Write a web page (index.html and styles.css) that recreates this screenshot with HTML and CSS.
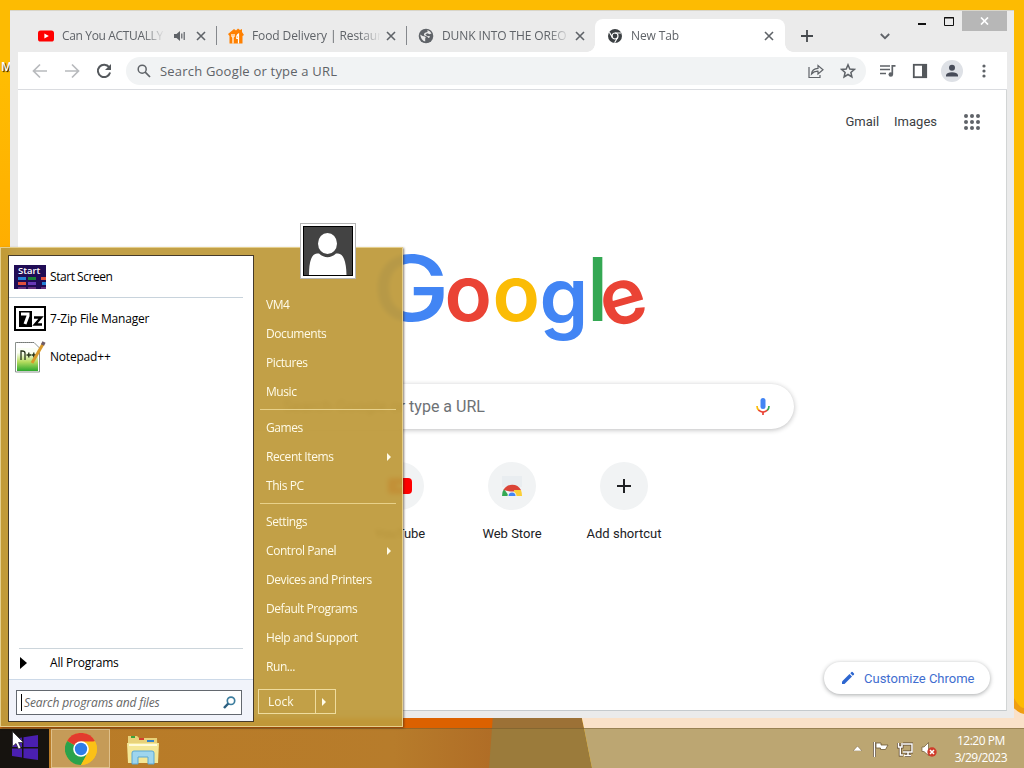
FILE: index.html
```
<!DOCTYPE html>
<html>
<head>
	<title>New Tab</title>
	<meta charset="utf-8"/>
	<link rel="stylesheet" href="styles.css">
</head>
<body>

<div class="desktop">
	<svg class="wallpaper" width="1024" height="768">
		<defs>
			<linearGradient id="wall" x1="0" y1="0" x2="0" y2="1">
				<stop offset="0" stop-color="#ffbd02"/>
				<stop offset=".3" stop-color="#ffa900"/>
				<stop offset="1" stop-color="#ff9800"/>
			</linearGradient>
			<linearGradient id="bar" x1="0" y1="0" x2="1" y2="0">
				<stop offset="0" stop-color="#b97b26"/>
				<stop offset=".8" stop-color="#b77c2b"/>
				<stop offset="1" stop-color="#b06d26"/>
			</linearGradient>
		</defs>
		<rect width="1024" height="768" fill="#fdbb02"/>
		<rect width="12" height="768" y="72" fill="url(#wall)"/>
		<rect x="0" y="700" width="496" height="28" fill="#dc6100"/>
		<path d="M494 700H578L584 728H492Z" fill="#9c7136"/>
		<path d="M578 700H1010Q1018 712 1024 712V728H584Z" fill="#fae1c8"/>
		<path d="M1010 690Q1018 708 1024 708V714Q1016 712 1010 704Z" fill="#ef9e12"/>
		<rect y="728" width="492" height="40" fill="url(#bar)"/>
		<path d="M492 728H584L592 768H489Z" fill="#9b7b3b"/>
		<path d="M584 728H1024V768H592Z" fill="#bca672"/>
	</svg>
	<div class="label">M</div>

	<!-- browser window -->
	<div class="window">
		<div class="tabs">
			<div class="tab">
				<svg width="16" height="16" viewBox="0 0 16 16"><rect y="2.5" width="16" height="11" rx="2.6" fill="#f00"/><path d="M6.4 5.4L10.8 8L6.4 10.6Z" fill="#fff"/></svg>
				<span class="title short">Can You ACTUALLY</span>
				<svg class="sound" width="12" height="12" viewBox="0 0 12 12"><path d="M0 4H2.5L6 1V11L2.5 8H0Z" fill="#5f6368"/><path d="M7.8 3.5V8.5M10.2 2V10" stroke="#5f6368" stroke-width="1.2"/></svg>
				<svg class="x" width="10" height="10" viewBox="0 0 10 10"><path d="M1 1L9 9M9 1L1 9"/></svg>
			</div>
			<div class="tab">
				<svg width="16" height="16" viewBox="0 0 16 16"><path d="M0 6L6 1L8 2.5L10 .5L12 2L14 1V4L16 7L14.500 8V15.500H1.500V8Z" fill="#ff8000"/><path d="M5 15.500V9M4 6V8.500Q5 10 6 8.500V6M10.500 15.500V6Q8.500 7 8.800 10.500H10.500" fill="none" stroke="#fff" stroke-width="1.200"/></svg>
				<span class="title">Food Delivery | Restaur</span>
				<svg class="x" width="10" height="10" viewBox="0 0 10 10"><path d="M1 1L9 9M9 1L1 9"/></svg>
			</div>
			<div class="tab">
				<svg width="16" height="16" viewBox="0 0 16 16"><circle cx="8" cy="8" r="7.300" fill="#5f6368"/><path d="M2.200 6.500Q4.500 8.500 7 8.600Q8.500 9.500 7.200 10.600V13.600Q3 12.500 2.200 6.500M9.500 2Q12.500 3 13.500 5.500L11.500 6.200L9.500 5.200L7.300 6.200L9 8L12 8.300Q12 9.700 10.200 10L9.600 8.800L6 7.300Q5.500 4.500 9.500 4Z" fill="#ebebeb"/></svg>
				<span class="title">DUNK INTO THE OREO</span>
				<svg class="x" width="10" height="10" viewBox="0 0 10 10"><path d="M1 1L9 9M9 1L1 9"/></svg>
			</div>
			<div class="tab active">
				<svg width="14" height="14" viewBox="0 0 14 14"><circle cx="7" cy="7" r="7" fill="#3c4043"/><circle cx="7" cy="7" r="3" fill="none" stroke="#fff" stroke-width="1.200"/><path d="M7 4H13M4.400 8.500L1.400 3.300M9.600 8.500L6.600 13.700" stroke="#fff" stroke-width="1.200"/></svg>
				<span class="title">New Tab</span>
				<svg class="x" width="10" height="10" viewBox="0 0 10 10"><path d="M1 1L9 9M9 1L1 9"/></svg>
			</div>
			<svg class="plus" width="12" height="12" viewBox="0 0 12 12"><path d="M6 0V12M0 6H12" stroke="#45494d" stroke-width="1.800"/></svg>
			<svg class="chevron" width="10" height="7" viewBox="0 0 10 7"><path d="M.8 1L5 5.200L9.200 1" fill="none" stroke="#5f6368" stroke-width="1.800"/></svg>
			<div class="controls">
				<svg width="44" height="20" viewBox="0 0 44 20"><path d="M0 13H8" stroke="#111" stroke-width="2"/><path d="M26.500 6.500H35.500V14.500H26.500ZM26 7H36" fill="none" stroke="#111" stroke-width="1"/></svg>
				<div class="close"><svg width="9" height="8" viewBox="0 0 9 8"><path d="M1 .5L8 7.500M8 .5L1 7.500" stroke="#fff" stroke-width="1.700"/></svg></div>
			</div>
		</div>
		<div class="toolbar">
			<svg width="16" height="16" viewBox="0 0 16 16"><path d="M15 8H2M8 1.500L1.500 8L8 14.500" fill="none" stroke="#b8babd" stroke-width="1.700"/></svg>
			<svg width="16" height="16" viewBox="0 0 16 16"><path d="M1 8H14M8 1.500L14.500 8L8 14.500" fill="none" stroke="#b8babd" stroke-width="1.700"/></svg>
			<svg width="16" height="16" viewBox="0 0 16 16"><path d="M13.200 4.300A6.200 6.200 0 1 0 14.100 9.500" fill="none" stroke="#54585c" stroke-width="2"/><path d="M15 1V7H9Z" fill="#54585c"/></svg>
			<div class="omnibox">
				<svg width="14" height="14" viewBox="0 0 14 14"><circle cx="5.200" cy="5.200" r="4" fill="none" stroke="#5f6368" stroke-width="1.500"/><path d="M8.200 8.200L13 13" stroke="#5f6368" stroke-width="1.700"/></svg>
				<span>Search Google or type a URL</span>
				<svg width="16" height="16" viewBox="0 0 16 16"><path d="M1 4V14.500H12V12" fill="none" stroke="#5f6368" stroke-width="1.200"/><path d="M3.500 11Q4 5.500 10 5.300V2.500L15 6.800L10 11V8.200Q6 8 3.500 11Z" fill="none" stroke="#5f6368" stroke-width="1.200"/></svg>
				<svg width="16" height="16" viewBox="0 0 16 16"><path d="M8 1.800L9.800 6L14.300 6.400L10.900 9.400L11.900 13.900L8 11.500L4.100 13.900L5.100 9.400L1.700 6.400L6.200 6Z" fill="none" stroke="#5f6368" stroke-width="1.500"/></svg>
			</div>
			<svg width="16" height="14" viewBox="0 0 16 14"><path d="M0 2H10M0 5.500H10M0 9.500H6" stroke="#5f6368" stroke-width="1.700"/><path d="M15.500 1.800H12.300V10" fill="none" stroke="#5f6368" stroke-width="1.700"/><circle cx="10.800" cy="10.500" r="2.300" fill="#5f6368"/></svg>
			<svg width="16" height="16" viewBox="0 0 16 16"><rect x="1.800" y="1.800" width="12.400" height="12.400" fill="none" stroke="#54585c" stroke-width="1.800"/><path d="M10 1H15V15H10Z" fill="#54585c"/></svg>
			<svg width="22" height="22" viewBox="0 0 22 22"><circle cx="11" cy="11" r="11" fill="#dee1e6"/><circle cx="11" cy="7.800" r="3" fill="#474c59"/><path d="M5 16.500V15Q6 12.200 11 12.200Q16 12.200 17 15V16.500Z" fill="#474c59"/></svg>
			<svg width="16" height="16" viewBox="0 0 16 16" fill="#5f6368"><circle cx="8" cy="3" r="1.600"/><circle cx="8" cy="8" r="1.600"/><circle cx="8" cy="13" r="1.600"/></svg>
		</div>
		<div class="page">
			<div class="links">
				<span>Gmail</span><span>Images</span>
				<svg width="16" height="16" viewBox="0 0 16 16" fill="#5f6368"><circle cx="2" cy="2" r="2"/><circle cx="8" cy="2" r="2"/><circle cx="14" cy="2" r="2"/><circle cx="2" cy="8" r="2"/><circle cx="8" cy="8" r="2"/><circle cx="14" cy="8" r="2"/><circle cx="2" cy="14" r="2"/><circle cx="8" cy="14" r="2"/><circle cx="14" cy="14" r="2"/></svg>
			</div>
			<svg class="logo" width="272" height="100" viewBox="0 0 272 100">
				<text class="g1" transform="translate(-4 73) scale(1.14 1)">G</text>
				<text y="73"><tspan class="red" x="68.500">o</tspan><tspan class="yellow" x="116.500">o</tspan><tspan class="blue" x="163.500" y="76">g</tspan><tspan class="green" x="210.500" y="73">l</tspan><tspan class="red" x="231" y="81" rotate="-16">e</tspan></text>
			</svg>
			<div class="search">
				<span>Search Google or type a URL</span>
				<svg width="14" height="20" viewBox="0 0 14 20"><rect x="4.500" y="1" width="5" height="11" rx="2.500" fill="#4285f4"/><path d="M1 9Q1 12 3 13.700" fill="none" stroke="#fbbc05" stroke-width="1.700"/><path d="M2.500 13.200Q7 17 11.500 13.200M7 15V18" fill="none" stroke="#ea4335" stroke-width="1.700"/><path d="M11.300 13.400Q13 12 13 9" fill="none" stroke="#34a853" stroke-width="1.700"/></svg>
			</div>
			<div class="shortcuts">
				<div class="item">
					<div class="circle"><svg width="24" height="16"><rect width="24" height="16" rx="4" fill="#f00"/><path d="M10 5L15 8L10 11Z" fill="#fff"/></svg></div>
					<span>YouTube</span>
				</div>
				<div class="item">
					<div class="circle"><svg width="24" height="24" viewBox="0 0 24 24"><rect x="2" y="2" width="20" height="11" fill="#e9edf0"/><path d="M2 22A10 10 0 0 1 4 15L9 22Z" fill="#34a853"/><path d="M3.500 16A10 10 0 0 1 21 16L12 18Z" fill="#db4437"/><path d="M14 16H21Q22 19 22 22H14Z" fill="#fbce36"/><path d="M7.500 22A4.500 4.500 0 0 1 16.500 22Z" fill="#f1f3f4"/><path d="M8.500 22A3.500 3.500 0 0 1 15.500 22Z" fill="#4285f4"/></svg></div>
					<span>Web Store</span>
				</div>
				<div class="item">
					<div class="circle"><svg width="14" height="14"><path d="M7 0V14M0 7H14" stroke="#202124" stroke-width="2"/></svg></div>
					<span>Add shortcut</span>
				</div>
			</div>
			<div class="customize">
				<svg width="14" height="14" viewBox="0 0 14 14" fill="#2d66d0"><path d="M1 10.500L8.500 3L11 5.500L3.500 13H1Z"/><path d="M9.300 2.200L10.500 1Q11 .6 11.600 1L13 2.500Q13.400 3 13 3.500L11.800 4.700Z"/></svg>
				<span>Customize Chrome</span>
			</div>
		</div>
	</div>

	<!-- taskbar -->
	<div class="taskbar">
		<div class="start"><svg width="26" height="25" viewBox="0 0 26 25" fill="#4a1fb0"><path d="M0 4L10 2.500V12H0ZM11.500 2.200L26 0V12H11.500ZM0 13.500H10V22.500L0 21ZM11.500 13.500H26V25L11.500 23Z"/></svg></div>
		<div class="task"><svg width="32" height="32" viewBox="0 0 32 32"><circle cx="16" cy="16" r="16" fill="#fbc116"/><path d="M16 16L2.100 8A16 16 0 0 1 29.900 8Z" fill="#e33b2e"/><path d="M2.100 8A16 16 0 0 0 16 32L23 20L16 16Z" fill="#2ba24c"/><path d="M16 8.500H30A16 16 0 0 1 16 32L22.500 20Z" fill="#fbc116"/><circle cx="16" cy="16" r="7.800" fill="#fff"/><circle cx="16" cy="16" r="6.200" fill="#2f7de8"/></svg></div>
		<svg class="folder" width="32" height="30" viewBox="0 0 32 30"><path d="M1 1H10L12 3H30L31 27H1Z" fill="#e8d27a"/><path d="M4 1H8V3H4Z" fill="#3ba23b"/><path d="M12 3H17V5H12Z" fill="#d63f2e"/><path d="M20 5H27V7H20Z" fill="#3583c9"/><path d="M0 8H32L31 28H1Z" fill="#f4e796"/><path d="M2 10H30" stroke="#fffbd9" stroke-width="2"/><path d="M5 29V18Q5 16 7 16H25Q27 16 27 18V29H21V22H11V29Z" fill="#9ed5ee" stroke="#5aa7d2"/></svg>
		<div class="tray">
			<svg width="9" height="5" viewBox="0 0 9 5"><path d="M0 5L4.500 0L9 5Z" fill="#fff" stroke="#77633c" stroke-width=".5"/></svg>
			<svg width="16" height="16" viewBox="0 0 16 16"><path d="M1.500 1V16" stroke="#5e4930" stroke-width="3"/><path d="M1.500 1V16" stroke="#fff" stroke-width="1.500"/><path d="M3 2H8V4H15L12.500 8.500H7.500V7H3Z" fill="#fff" stroke="#6b5733" stroke-width=".8"/></svg>
			<svg width="16" height="16" viewBox="0 0 16 16"><path d="M6 3H15V11H6M8 14.500H14M11 11V14.500M1.500 2V6H5V2M3.300 6V14H6" fill="none" stroke="#5e4930" stroke-width="3"/><path d="M6 3H15V11H6M7 14.500H14M11 11V14.500M1.500 2V6H5V2M3.300 6V14H6" fill="none" stroke="#fff" stroke-width="1.500"/></svg>
			<svg width="16" height="16" viewBox="0 0 16 16"><path d="M1 6H3L7.500 1.500V14.500L3 10.500H1Z" fill="#fff" stroke="#6b5733" stroke-width=".7"/><circle cx="11" cy="11" r="4.700" fill="#cf3c2b"/><path d="M9 9L13 13M13 9L9 13" stroke="#fff" stroke-width="1.500"/></svg>
			<div class="clock">12:20 PM<br>3/29/2023</div>
		</div>
	</div>

	<!-- start menu -->
	<div class="menu">
		<div class="programs">
			<div class="row first">
				<svg width="32" height="24" viewBox="0 0 32 24"><rect width="32" height="24" fill="#200c55"/><text class="tile" x="4" y="9">Start</text><path d="M4 13.500H12M28 18.500H32" stroke="#2381d8" stroke-width="3"/><path d="M14 13.500H22" stroke="#188038" stroke-width="3"/><path d="M4 18.500H12M27 13.500H32" stroke="#e0503d" stroke-width="3"/><path d="M14 18.500H22" stroke="#673ab7" stroke-width="3"/><path d="M4 23H12M14 23H22M27 23H32" stroke="#7c3c8c" stroke-width="1.500"/></svg>
				<span>Start Screen</span>
			</div>
			<div class="row zip">
				<svg width="32" height="25" viewBox="0 0 32 25"><rect x="1" y="1" width="30" height="23" fill="#fff" stroke="#000" stroke-width="2"/><rect x="5" y="5" width="13" height="16"/><path d="M7 8H14V10L11 18" fill="none" stroke="#fff" stroke-width="3"/><path d="M20 11.500H27L21 18.500H28" fill="none" stroke="#000" stroke-width="2.500"/></svg>
				<span>7-Zip File Manager</span>
			</div>
			<div class="row">
				<svg width="32" height="32" viewBox="0 0 32 32"><defs><linearGradient id="note" x1="0" y1="0" x2="0" y2="1"><stop offset=".2" stop-color="#fbfff3"/><stop offset=".6" stop-color="#b5dc5f"/><stop offset="1" stop-color="#2da82e"/></linearGradient></defs><path d="M1.500 1.500H20L25.500 7V31H1.500Z" fill="#fff" stroke="#8b938d"/><rect x="3" y="7" width="21" height="23" fill="url(#note)"/><path d="M3 1.500H20" stroke="#777" stroke-dasharray="1 1"/><path d="M7 19V10H8Q11 10 11 12V19M12.500 14H17M14.800 11.500V16.500M17.500 14H22M19.800 11.500V16.500" fill="none" stroke="#263319" stroke-width="1.300"/><path d="M29 3L18 22" stroke="#d99a2b" stroke-width="3"/><path d="M30 1L28.500 4" stroke="#6e5c68" stroke-width="3.500"/></svg>
				<span>Notepad++</span>
			</div>
			<div class="all">
				<svg width="7" height="12"><path d="M0 0L7 6L0 12Z"/></svg>
				<span>All Programs</span>
			</div>
			<div class="find">
				<div class="input">
					<span>Search programs and files</span>
					<svg width="13" height="13" viewBox="0 0 13 13"><circle cx="8" cy="4.800" r="3.700" fill="#fff" stroke="#3c7d9e" stroke-width="1.700"/><path d="M5.300 7.500L1 12" stroke="#2b5f80" stroke-width="2.500"/></svg>
				</div>
			</div>
		</div>
		<div class="places">
			<p>VM4</p>
			<p>Documents</p>
			<p>Pictures</p>
			<p>Music</p>
			<hr>
			<p>Games</p>
			<p class="more">Recent Items</p>
			<p>This PC</p>
			<hr>
			<p>Settings</p>
			<p class="more">Control Panel</p>
			<p>Devices and Printers</p>
			<p>Default Programs</p>
			<p>Help and Support</p>
			<p>Run...</p>
			<div class="lock"><span>Lock</span><i></i></div>
		</div>
		<div class="avatar"><svg width="50" height="50" viewBox="0 0 50 50"><rect x=".5" y=".5" width="49" height="49" fill="#434343" stroke="#000"/><ellipse cx="24.500" cy="17.500" rx="9.500" ry="10.500" fill="#fff"/><path d="M6 49Q6 28 14 27.500H16Q24.500 35 33 27.500H35Q43 28 43.500 49Z" fill="#fff"/></svg></div>
	</div>

	<svg class="cursor" width="12" height="19" viewBox="0 0 12 19"><path d="M.5 .5V15.500L4 12.500L6.500 18L9 17L6.500 11.500H11.500Z" fill="#fff" stroke="#222" stroke-width=".7"/></svg>
</div>

</body>
</html>
```
FILE: styles.css
```
* {
	margin: 0px;
	padding: 0px;
	box-sizing: border-box;
}
svg {
	display: block;
	flex: none;
}

.desktop {
	position: relative;
	width: 1024px;
	height: 768px;
	overflow: hidden;
	font-family: "Open Sans", "Noto Sans", sans-serif;
	font-size: 12px;
	white-space: nowrap;
}
.wallpaper {
	position: absolute;
	left: 0px;
	top: 0px;
}
.label {
	position: absolute;
	left: 1px;
	top: 58px;
	color: white;
	font-weight: 600;
	text-shadow: 1px 1px 1px black;
}

/* browser window */
.window {
	position: absolute;
	left: 10px;
	top: 10px;
	width: 1004px;
	height: 708px;
	padding: 0px 7px 7px 8px;
	display: flex;
	flex-direction: column;
	background-color: #ebebeb;
	border-top: 1px solid #d9d5c8;
}
	.tabs {
		height: 41px;
		display: flex;
		padding: 8px 0px 0px 10px;
		color: #5f6368;
	}
	.tab {
		width: 190px;
		height: 33px;
		padding: 0px 12px 0px 10px;
		display: flex;
		align-items: center;
		position: relative;
	}
	.tab + .tab:not(.active)::before {
		content: "";
		position: absolute;
		left: -2px;
		top: 7px;
		width: 1px;
		height: 19px;
		background-color: #85888c;
	}
	.tab:nth-child(3) {
		padding-right: 13px;
	}
	.tab:nth-child(4) {
		margin-left: -3px;
		padding: 0px 11px 0px 13px;
	}
	.tab .title {
		flex: 1;
		margin: 0px 5px 0px 8px;
		overflow: hidden;
		letter-spacing: -0.1px;
		-webkit-mask-image: linear-gradient(to left, transparent, black 22px);
	}
	.tab .sound {
		margin-right: 10px;
	}
	.tab .short {
		margin-right: 9px;
		letter-spacing: -0.35px;
	}
	.active .title {
		margin-left: 9px;
	}
	.x {
		fill: none;
		stroke: #5f6368;
		stroke-width: 1.6;
	}
	.active {
		background-color: white;
		border-radius: 8px 8px 0px 0px;
	}
	.active::before, .active::after {
		content: "";
		position: absolute;
		bottom: 0px;
		width: 8px;
		height: 8px;
	}
	.active::before {
		left: -8px;
		background: radial-gradient(circle at 0px 0px, transparent 7.5px, white 8px);
	}
	.active::after {
		right: -8px;
		background: radial-gradient(circle at 8px 0px, transparent 7.5px, white 8px);
	}
	.plus {
		margin: 11px 0px 0px 16px;
	}
	.chevron {
		margin: 14px 0px 0px 67px;
	}
	.controls {
		margin: -8px 0px 0px auto;
		display: flex;
	}
	.close {
		width: 45px;
		height: 20px;
		display: flex;
		align-items: center;
		justify-content: center;
		background-color: #b7b7b7;
	}

	.toolbar {
		height: 38px;
		padding: 0px 15px 0px 14px;
		display: flex;
		align-items: center;
		gap: 16px;
		background-color: white;
		border-bottom: 1px solid #dadce0;
	}
	.omnibox {
		flex: 1;
		height: 28px;
		margin: 0px -2px 0px -2px;
		padding: 0px 10px 0px 11px;
		display: flex;
		align-items: center;
		gap: 16px;
		border-radius: 14px;
		background-color: #f1f3f4;
		color: #5f6368;
		font-size: 13px;
		letter-spacing: 0.2px;
	}
	.omnibox span {
		flex: 1;
		margin-left: -7px;
	}
	.toolbar > svg:nth-last-child(2) {
		margin: 0px -3px;
	}

	.page {
		flex: 1;
		position: relative;
		display: flex;
		flex-direction: column;
		align-items: center;
		background-color: white;
		font-family: Roboto, sans-serif;
		font-size: 13px;
		color: #202124;
		border-bottom: 1px solid #c5cacd;
		border-right: 1px solid #d2d5d5;
	}
	.links {
		align-self: flex-end;
		height: 64px;
		padding-right: 26px;
		display: flex;
		align-items: center;
		gap: 15px;
		color: #3c4043;
	}
	.links span {
		margin-top: -2px;
	}
	.links svg {
		margin-left: 12px;
	}
	.logo {
		margin-top: 94px;
		font-family: Inter, sans-serif;
		font-size: 78px;
		font-weight: 600;
		overflow: visible;
	}
		.g1 { font-size: 91px; font-weight: 500; fill: #4285f4; }
		.blue { fill: #4285f4; }
		.red { fill: #ea4335; }
		.yellow { fill: #fbbc05; }
		.green { font-size: 88px; font-weight: 500; fill: #34a853; }
	.search {
		width: 564px;
		height: 45px;
		margin-top: 36px;
		padding: 0px 24px 0px 53px;
		display: flex;
		align-items: center;
		justify-content: space-between;
		border-radius: 23px;
		background-color: white;
		box-shadow: 0px 1px 5px rgba(32, 33, 36, 0.3);
		font-size: 16px;
		color: #6d7175;
	}
	.shortcuts {
		display: flex;
		margin-top: 33px;
	}
	.item {
		width: 112px;
		display: flex;
		flex-direction: column;
		align-items: center;
		gap: 16px;
	}
	.circle {
		width: 48px;
		height: 48px;
		border-radius: 24px;
		background-color: #f1f3f4;
		display: flex;
		align-items: center;
		justify-content: center;
	}
	.customize {
		align-self: flex-end;
		width: 166px;
		height: 32px;
		margin: auto 16px 16px 0px;
		padding-left: 17px;
		display: flex;
		align-items: center;
		gap: 9px;
		border-radius: 16px;
		box-shadow: 0px 1px 4px rgba(60, 64, 67, 0.45);
		color: #3f6ed0;
	}

/* taskbar */
.taskbar {
	position: absolute;
	left: 0px;
	bottom: 0px;
	width: 100%;
	height: 40px;
	display: flex;
	border-top: 1px solid rgba(100, 75, 35, 0.4);
}
	.start {
		width: 49px;
		padding: 6px 0px 0px 12px;
		background-color: #16130f;
	}
	.task {
		width: 59px;
		margin-left: 2px;
		display: flex;
		align-items: center;
		justify-content: center;
		background-color: #c59b58;
		border: 1px solid #dfc08b;
	}
	.folder {
		margin: 6px 0px 0px 17px;
	}
	.tray {
		margin-left: auto;
		padding-right: 17px;
		display: flex;
		align-items: center;
		gap: 8px;
		color: white;
		text-align: center;
		line-height: 17px;
		letter-spacing: -0.5px;
	}
	.tray svg:first-child {
		margin-right: 3px;
	}
	.clock {
		margin-left: 10px;
	}

/* start menu */
.menu {
	position: absolute;
	left: 0px;
	top: 247px;
	width: 403px;
	height: 480px;
	padding: 7px 5px 4px 7px;
	display: flex;
	background-color: rgba(190, 154, 60, 0.94);
	backdrop-filter: blur(2px);
	border: 1px solid #e5cf8c;
	box-shadow: 1px 1px 2px rgba(60, 40, 20, 0.6);
	letter-spacing: -0.2px;
}
	.programs {
		width: 246px;
		height: 467px;
		display: flex;
		flex-direction: column;
		background-color: white;
		border: 1px solid #453a2a;
	}
	.row {
		height: 35px;
		padding-left: 5px;
		display: flex;
		align-items: center;
		gap: 4px;
	}
	.first {
		height: 42px;
		margin-right: 10px;
		border-bottom: 1px solid #c8d3dc;
		letter-spacing: -0.45px;
	}
	.zip {
		height: 41px;
	}
	.all {
		height: 31px;
		margin: auto 10px 0px 10px;
		padding: 0px 0px 3px 1px;
		display: flex;
		align-items: center;
		gap: 23px;
		border-top: 1px solid #ccd5db;
	}
	.find {
		height: 42px;
		padding: 10px 11px 0px 7px;
		background-color: #f1f3fa;
		border-top: 1px solid #ccd9e8;
	}
	.input {
		height: 25px;
		padding: 0px 5px 0px 4px;
		display: flex;
		align-items: center;
		justify-content: space-between;
		background-color: white;
		border: 1px solid #63686f;
		color: #666;
		font-style: italic;
		letter-spacing: -0.12px;
	}
	.input span {
		border-left: 1px solid black;
		padding-left: 2px;
	}
	.tile {
		font-size: 9.5px;
		font-weight: 600;
		letter-spacing: 0px;
		fill: white;
	}

	.places {
		flex: 1;
		padding: 35px 0px 0px 4px;
		color: #fffbe8;
		font-weight: 500;
		letter-spacing: -0.43px;
	}
	.places p {
		height: 29px;
		line-height: 29px;
		padding-left: 8px;
	}
	.places hr {
		width: 136px;
		height: 1px;
		margin: 3px 0px 3px 2px;
		border: none;
		background-color: #e8d18a;
	}
	.more {
		display: flex;
		align-items: center;
		justify-content: space-between;
		padding-right: 6px;
	}
	.more::after, .lock i {
		content: "";
		border: 4px solid transparent;
		border-left-color: #fffbe8;
		border-right: none;
	}
	.lock {
		width: 78px;
		height: 25px;
		margin-top: 8px;
		display: flex;
		align-items: center;
		border: 1px solid #efdc9e;
		letter-spacing: 0px;
	}
	.lock span {
		width: 57px;
		line-height: 23px;
		padding-left: 9px;
		margin-right: 6px;
		border-right: 1px solid #efdc9e;
	}
	.avatar {
		position: absolute;
		left: 299px;
		top: -25px;
		padding: 2px;
		background-color: white;
		border: 1px solid #b5b5b5;
	}

.cursor {
	position: absolute;
	left: 12px;
	top: 731px;
}
```
